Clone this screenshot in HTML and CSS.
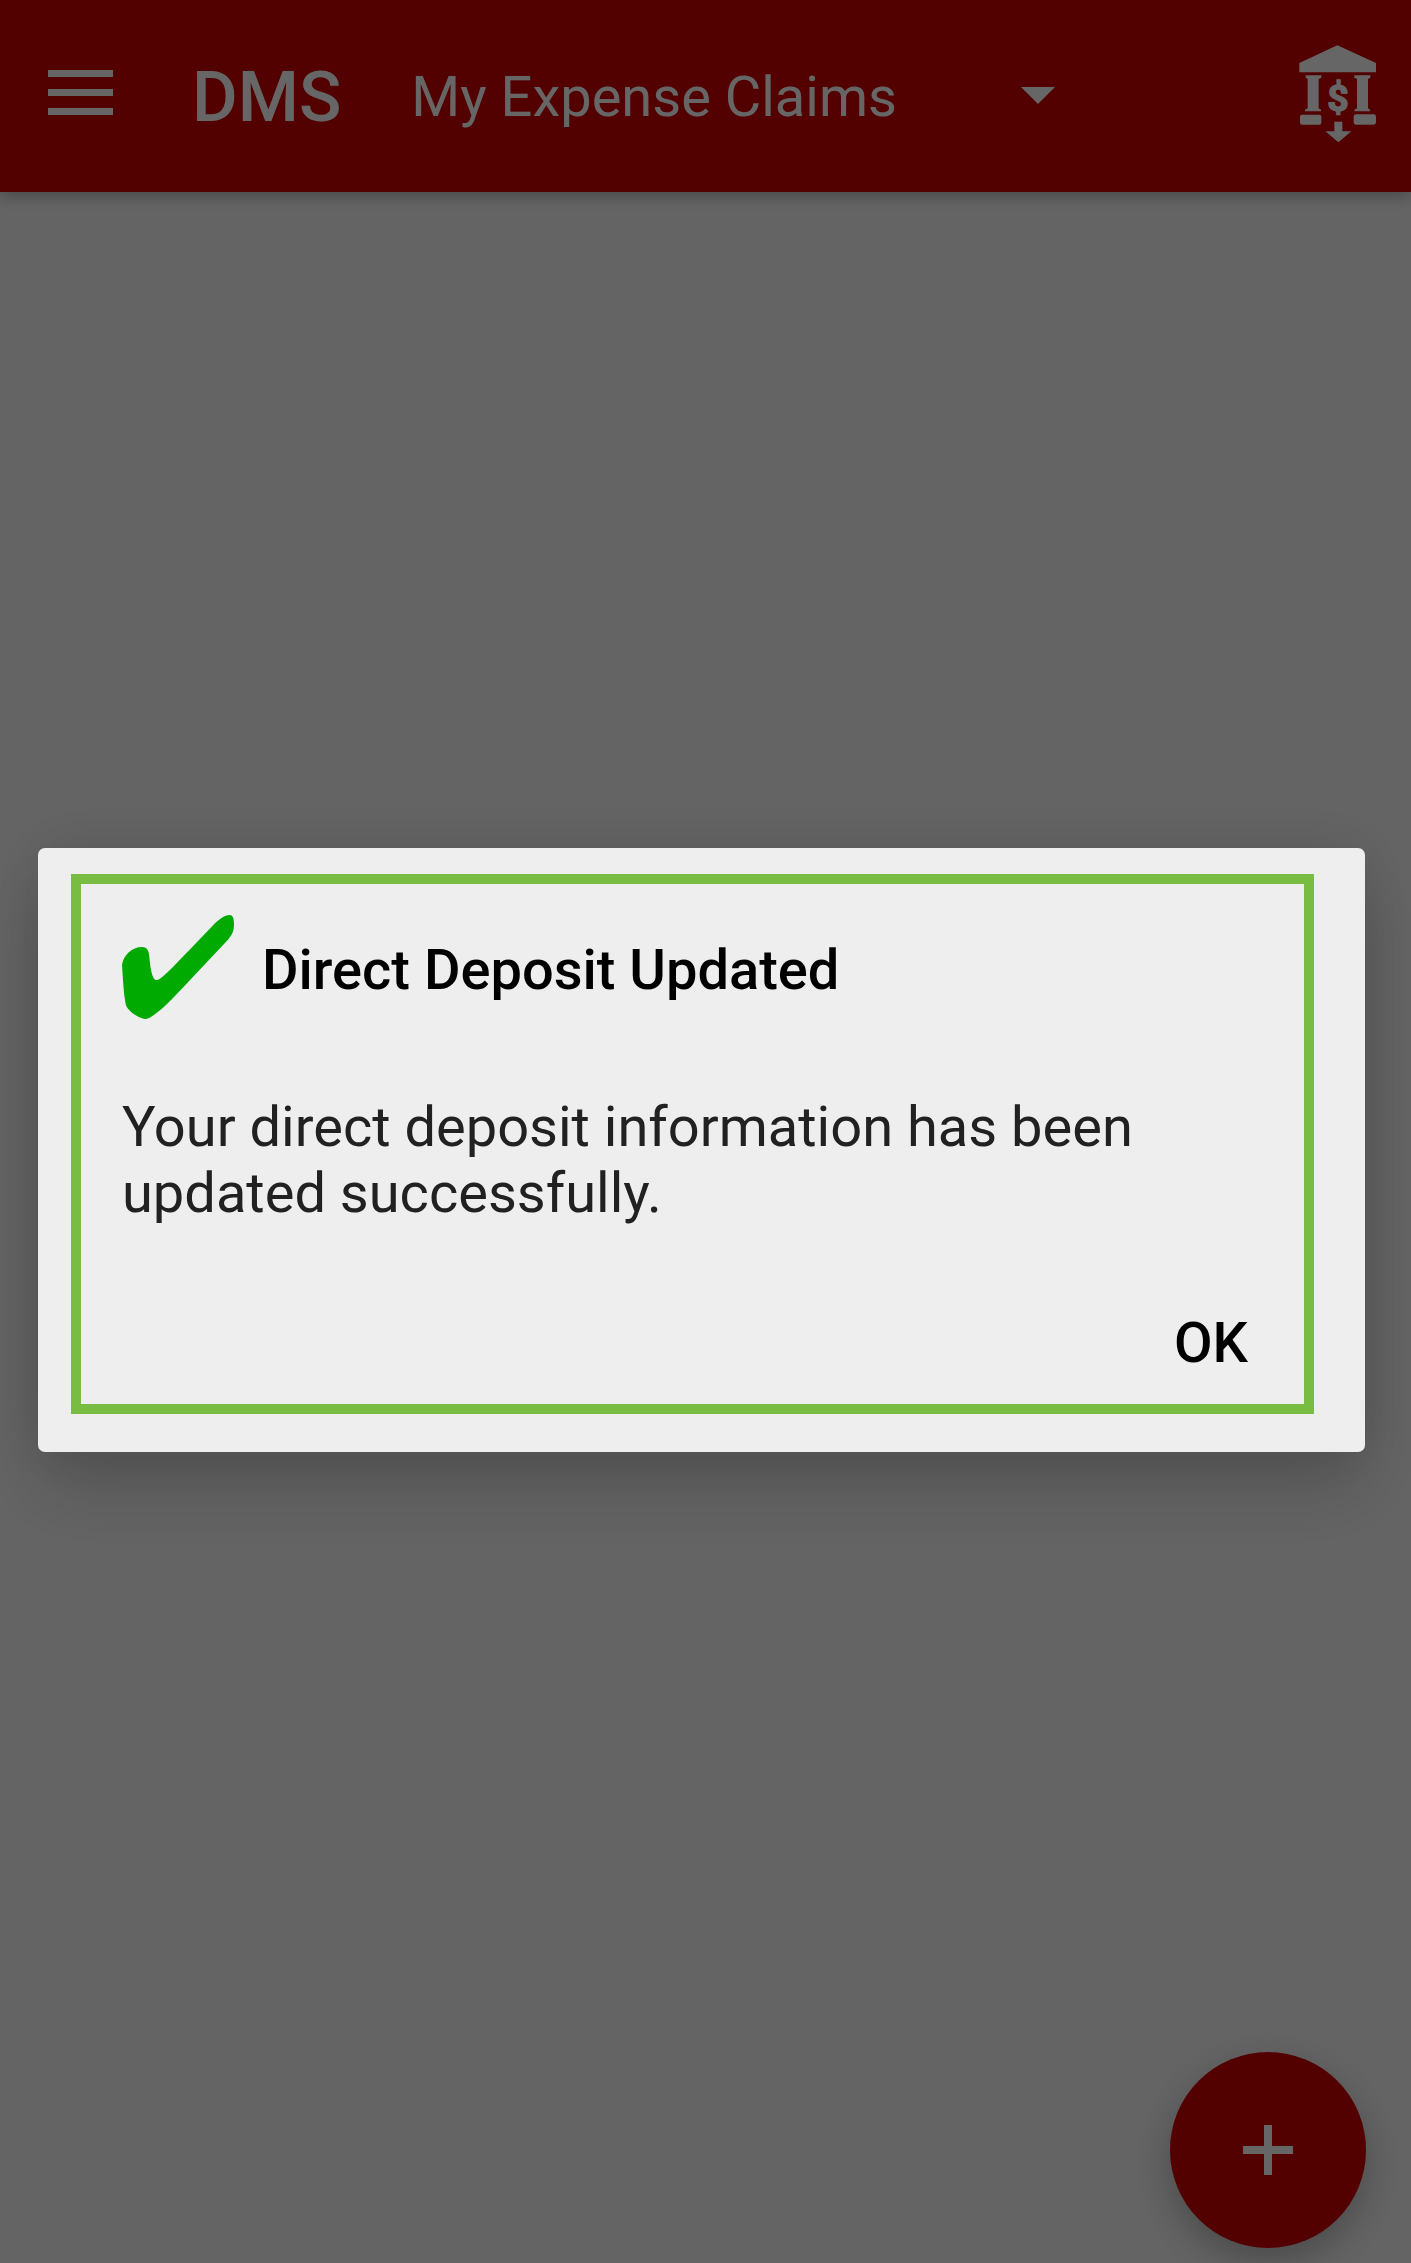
FILE: index.html
```html
<!DOCTYPE html>
<html lang="en">
<head>
    <meta charset="UTF-8">
    <meta name="viewport" content="width=device-width, initial-scale=1.0">
    <title>DMS - My Expense Claims</title>
    <link rel="stylesheet" href="styles.css">
</head>
<body>

    <header class="toolbar">
        <button type="button" class="icon-button" aria-label="Open menu">
            <svg width="66" height="56" viewBox="0 0 66 56" fill="currentColor">
                <rect x="1" y="1" width="65" height="7"/>
                <rect x="1" y="20" width="65" height="7"/>
                <rect x="1" y="39" width="65" height="7"/>
            </svg>
        </button>
        <h1 class="app-name">DMS</h1>
        <div class="page-picker">
            <select id="page" aria-label="Page">
                <option>My Expense Claims</option>
            </select>
            <svg class="arrow" width="34" height="20" viewBox="0 0 34 20" fill="currentColor">
                <path d="M0 0h34L17 17z"/>
            </svg>
        </div>
        <button type="button" class="icon-button deposit" aria-label="Direct deposit">
            <svg width="77" height="104" viewBox="57 45 231 312" fill="currentColor">
                <path d="M172 46L288 99V127H58V99z"/>
                <path d="M77 136h47v7l-8 4v88l7 4v5H75v-5l8-4v-88l-6-4z"/>
                <path d="M223 136h48v7l-7 4v88l6 4v5h-47v-5l8-4v-88l-8-4z"/>
                <rect x="60" y="254" width="64" height="30" rx="6"/>
                <rect x="221" y="253" width="67" height="31" rx="7"/>
                <path d="M163 275h24v29h27l-39 33-39-33h27z"/>
                <text class="dollar" x="174" y="243" text-anchor="middle">$</text>
            </svg>
        </button>
    </header>

    <main>
        <button type="button" class="fab" aria-label="Add claim">
            <svg width="50" height="50" viewBox="0 0 50 50" fill="currentColor">
                <path d="M21 0h8v21h21v8H29v21h-8V29H0v-8h21z"/>
            </svg>
        </button>
    </main>

    <!-- Confirmation dialog -->
    <div class="overlay">
        <div class="dialog" role="alertdialog" aria-labelledby="dialogTitle" aria-describedby="dialogText">
            <div class="dialog-frame">
                <div class="dialog-head">
                    <svg class="check" width="112" height="110" viewBox="306 255 336 330" fill="currentColor">
                        <path d="M306 405C310 375 338 350 367 351C381 352 387 362 388 380C391 412 396 450 410 450C420 450 436 433 456 414L580 285C597 267 616 255 628 255C639 255 642 265 642 283C642 304 636 315 624 329L467 496C435 530 394 567 376 567C358 566 321 543 317 523C310 485 309 446 306 405z"/>
                    </svg>
                    <h2 id="dialogTitle">Direct Deposit Updated</h2>
                </div>
                <p id="dialogText">Your direct deposit information has been updated successfully.</p>
                <div class="dialog-actions">
                    <button type="button" class="ok-button">OK</button>
                </div>
            </div>
        </div>
    </div>

</body>
</html>
```

FILE: styles.css
```css
* {
    box-sizing: border-box;
}

body {
    margin: 0;
    min-height: 100vh;
    font-family: Roboto, sans-serif;
    font-size: 56px;
    line-height: 66px;
    background-color: #fafafa;
    color: #212121;
}

h1, h2, p {
    margin: 0;
}

button, select {
    margin: 0;
    padding: 0;
    border: none;
    background: none;
    color: inherit;
    font: inherit;
    cursor: pointer;
}

svg {
    display: block;
}

.toolbar {
    display: flex;
    align-items: center;
    height: 192px;
    padding: 2px 35px 0 47px;
    background-color: #cd0000;
    color: #fff;
    box-shadow: 0 5px 14px rgba(0, 0, 0, 0.26);
}

.app-name {
    margin: 0 70px 0 79px;
    font-size: 70px;
    font-weight: 500;
    line-height: 82px;
}

.page-picker {
    display: grid;
    flex: 0 1 644px;
    align-items: center;
}

.page-picker select {
    grid-area: 1 / 1;
    width: 100%;
    height: 66px;
    appearance: none;
}

.page-picker .arrow {
    grid-area: 1 / 1;
    justify-self: end;
    pointer-events: none;
}

.deposit {
    margin-left: auto;
}

.dollar {
    font-size: 112px;
    font-weight: 700;
    stroke: currentColor;
    stroke-width: 4px;
}

.fab {
    position: fixed;
    right: 45px;
    bottom: 15px;
    display: flex;
    align-items: center;
    justify-content: center;
    width: 196px;
    height: 196px;
    border-radius: 50%;
    background-color: #cd0000;
    color: #fff;
    box-shadow: 0 14px 36px rgba(0, 0, 0, 0.26);
}

.overlay {
    position: fixed;
    inset: 0;
    display: flex;
    align-items: center;
    padding: 36px 46px 0 38px;
    background-color: rgba(0, 0, 0, 0.6);
}

.dialog {
    flex: 1;
    padding: 26px 51px 38px 33px;
    border-radius: 7px;
    background-color: #eee;
    box-shadow: 0 40px 70px rgba(0, 0, 0, 0.16), 0 0 60px rgba(0, 0, 0, 0.12);
}

.dialog-frame {
    padding: 31px 56px 28px 41px;
    border: 10px solid #78bd42;
}

.dialog-head {
    display: flex;
    align-items: center;
    gap: 28px;
}

.check {
    color: #0a0;
}

.dialog-head h2 {
    color: #000;
    font-size: 56px;
    font-weight: 500;
}

.dialog-frame p {
    margin: 69px 0 84px;
}

.dialog-actions {
    display: flex;
    justify-content: flex-end;
}

.ok-button {
    color: #000;
    font-weight: 500;
}
```
